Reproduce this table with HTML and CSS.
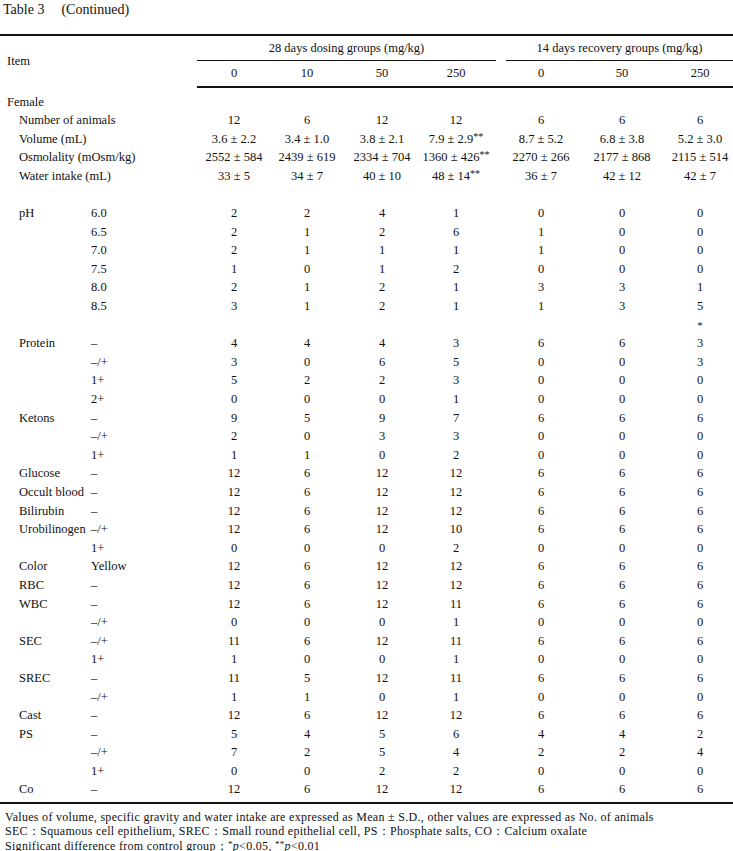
FILE: index.html
```html
<!DOCTYPE html>
<html>
<head>
<meta charset="utf-8">
<link rel="stylesheet" href="styles.css">
</head>
<body>
<div class="title">Table 3<span class="tsp"></span>(Continued)</div>
<table class="data">
<colgroup>
<col class="c-item"><col class="c-sub"><col class="c1"><col class="c2"><col class="c3"><col class="c4"><col class="c5"><col class="c6"><col class="c7">
</colgroup>
<thead>
<tr class="h1">
<th rowspan="2" colspan="2" class="item">Item</th>
<th colspan="4" class="grp"><div class="grp-label dose">28 days dosing groups (mg/kg)</div></th>
<th colspan="3" class="grp"><div class="grp-label rec">14 days recovery groups (mg/kg)</div></th>
</tr>
<tr class="h2">
<th>0</th><th>10</th><th>50</th><th>250</th><th>0</th><th>50</th><th class="last">250</th>
</tr>
</thead>
<tbody>
<tr class="sp"><td colspan="9"></td></tr>
<tr><td colspan="2" class="sex">Female</td><td></td><td></td><td></td><td></td><td></td><td></td><td class="last"></td></tr>
<tr><td colspan="2" class="lbl">Number of animals</td><td>12</td><td>6</td><td>12</td><td>12</td><td>6</td><td>6</td><td class="last">6</td></tr>
<tr><td colspan="2" class="lbl">Volume (mL)</td><td>3.6 ± 2.2</td><td>3.4 ± 1.0</td><td>3.8 ± 2.1</td><td>7.9 ± 2.9<span class="sig">**</span></td><td>8.7 ± 5.2</td><td>6.8 ± 3.8</td><td class="last">5.2 ± 3.0</td></tr>
<tr><td colspan="2" class="lbl">Osmolality (mOsm/kg)</td><td>2552 ± 584</td><td>2439 ± 619</td><td>2334 ± 704</td><td>1360 ± 426<span class="sig">**</span></td><td>2270 ± 266</td><td>2177 ± 868</td><td class="last">2115 ± 514</td></tr>
<tr><td colspan="2" class="lbl">Water intake (mL)</td><td>33 ± 5</td><td>34 ± 7</td><td>40 ± 10</td><td>48 ± 14<span class="sig">**</span></td><td>36 ± 7</td><td>42 ± 12</td><td class="last">42 ± 7</td></tr>
<tr><td colspan="9"></td></tr>
<tr><td class="lbl">pH</td><td class="sub">6.0</td><td>2</td><td>2</td><td>4</td><td>1</td><td>0</td><td>0</td><td class="last">0</td></tr>
<tr><td class="lbl"></td><td class="sub">6.5</td><td>2</td><td>1</td><td>2</td><td>6</td><td>1</td><td>0</td><td class="last">0</td></tr>
<tr><td class="lbl"></td><td class="sub">7.0</td><td>2</td><td>1</td><td>1</td><td>1</td><td>1</td><td>0</td><td class="last">0</td></tr>
<tr><td class="lbl"></td><td class="sub">7.5</td><td>1</td><td>0</td><td>1</td><td>2</td><td>0</td><td>0</td><td class="last">0</td></tr>
<tr><td class="lbl"></td><td class="sub">8.0</td><td>2</td><td>1</td><td>2</td><td>1</td><td>3</td><td>3</td><td class="last">1</td></tr>
<tr><td class="lbl"></td><td class="sub">8.5</td><td>3</td><td>1</td><td>2</td><td>1</td><td>1</td><td>3</td><td class="last">5</td></tr>
<tr><td class="lbl"></td><td class="sub"></td><td></td><td></td><td></td><td></td><td></td><td></td><td class="last"><span class="star">*</span></td></tr>
<tr><td class="lbl">Protein</td><td class="sub">–</td><td>4</td><td>4</td><td>4</td><td>3</td><td>6</td><td>6</td><td class="last">3</td></tr>
<tr><td class="lbl"></td><td class="sub">–/+</td><td>3</td><td>0</td><td>6</td><td>5</td><td>0</td><td>0</td><td class="last">3</td></tr>
<tr><td class="lbl"></td><td class="sub">1+</td><td>5</td><td>2</td><td>2</td><td>3</td><td>0</td><td>0</td><td class="last">0</td></tr>
<tr><td class="lbl"></td><td class="sub">2+</td><td>0</td><td>0</td><td>0</td><td>1</td><td>0</td><td>0</td><td class="last">0</td></tr>
<tr><td class="lbl">Ketons</td><td class="sub">–</td><td>9</td><td>5</td><td>9</td><td>7</td><td>6</td><td>6</td><td class="last">6</td></tr>
<tr><td class="lbl"></td><td class="sub">–/+</td><td>2</td><td>0</td><td>3</td><td>3</td><td>0</td><td>0</td><td class="last">0</td></tr>
<tr><td class="lbl"></td><td class="sub">1+</td><td>1</td><td>1</td><td>0</td><td>2</td><td>0</td><td>0</td><td class="last">0</td></tr>
<tr><td class="lbl">Glucose</td><td class="sub">–</td><td>12</td><td>6</td><td>12</td><td>12</td><td>6</td><td>6</td><td class="last">6</td></tr>
<tr><td class="lbl">Occult blood</td><td class="sub">–</td><td>12</td><td>6</td><td>12</td><td>12</td><td>6</td><td>6</td><td class="last">6</td></tr>
<tr><td class="lbl">Bilirubin</td><td class="sub">–</td><td>12</td><td>6</td><td>12</td><td>12</td><td>6</td><td>6</td><td class="last">6</td></tr>
<tr><td class="lbl">Urobilinogen</td><td class="sub">–/+</td><td>12</td><td>6</td><td>12</td><td>10</td><td>6</td><td>6</td><td class="last">6</td></tr>
<tr><td class="lbl"></td><td class="sub">1+</td><td>0</td><td>0</td><td>0</td><td>2</td><td>0</td><td>0</td><td class="last">0</td></tr>
<tr><td class="lbl">Color</td><td class="sub">Yellow</td><td>12</td><td>6</td><td>12</td><td>12</td><td>6</td><td>6</td><td class="last">6</td></tr>
<tr><td class="lbl">RBC</td><td class="sub">–</td><td>12</td><td>6</td><td>12</td><td>12</td><td>6</td><td>6</td><td class="last">6</td></tr>
<tr><td class="lbl">WBC</td><td class="sub">–</td><td>12</td><td>6</td><td>12</td><td>11</td><td>6</td><td>6</td><td class="last">6</td></tr>
<tr><td class="lbl"></td><td class="sub">–/+</td><td>0</td><td>0</td><td>0</td><td>1</td><td>0</td><td>0</td><td class="last">0</td></tr>
<tr><td class="lbl">SEC</td><td class="sub">–/+</td><td>11</td><td>6</td><td>12</td><td>11</td><td>6</td><td>6</td><td class="last">6</td></tr>
<tr><td class="lbl"></td><td class="sub">1+</td><td>1</td><td>0</td><td>0</td><td>1</td><td>0</td><td>0</td><td class="last">0</td></tr>
<tr><td class="lbl">SREC</td><td class="sub">–</td><td>11</td><td>5</td><td>12</td><td>11</td><td>6</td><td>6</td><td class="last">6</td></tr>
<tr><td class="lbl"></td><td class="sub">–/+</td><td>1</td><td>1</td><td>0</td><td>1</td><td>0</td><td>0</td><td class="last">0</td></tr>
<tr><td class="lbl">Cast</td><td class="sub">–</td><td>12</td><td>6</td><td>12</td><td>12</td><td>6</td><td>6</td><td class="last">6</td></tr>
<tr><td class="lbl">PS</td><td class="sub">–</td><td>5</td><td>4</td><td>5</td><td>6</td><td>4</td><td>4</td><td class="last">2</td></tr>
<tr><td class="lbl"></td><td class="sub">–/+</td><td>7</td><td>2</td><td>5</td><td>4</td><td>2</td><td>2</td><td class="last">4</td></tr>
<tr><td class="lbl"></td><td class="sub">1+</td><td>0</td><td>0</td><td>2</td><td>2</td><td>0</td><td>0</td><td class="last">0</td></tr>
<tr><td class="lbl">Co</td><td class="sub">–</td><td>12</td><td>6</td><td>12</td><td>12</td><td>6</td><td>6</td><td class="last">6</td></tr>
<tr class="sp-end"><td colspan="9"></td></tr>
</tbody>
</table>
<div class="notes">
<p>Values of volume, specific gravity and water intake are expressed as Mean ± S.D., other values are expressed as No. of animals</p>
<p>SEC：Squamous cell epithelium, SREC：Small round epithelial cell, PS：Phosphate salts, CO：Calcium oxalate</p>
<p>Significant difference from control group；<span class="nsig">*</span><i>p</i>&lt;0.05, <span class="nsig">**</span><i>p</i>&lt;0.01</p>
</div>
</body>
</html>
```
FILE: styles.css
```css
html, body {
  margin: 0;
  padding: 0;
  background: #fff;
}
body {
  width: 733px;
  font-family: "Liberation Serif", "Times New Roman", serif;
  color: #111;
  font-size: 12.5px;
}
.title {
  height: 20px;
  line-height: 20px;
  padding-left: 3px;
  font-size: 14px;
  margin-bottom: 14px;
}
.tsp {
  display: inline-block;
  width: 17px;
}
.data {
  width: 733px;
  table-layout: fixed;
  border-collapse: collapse;
  border-top: 2px solid #111;
  border-bottom: 2px solid #111;
}
.c-item { width: 87px; }
.c-sub { width: 110px; }
.c1 { width: 74px; }
.c2 { width: 72px; }
.c3 { width: 78px; }
.c4 { width: 70px; }
.c5 { width: 100px; }
.c6 { width: 62px; }
.c7 { width: 80px; }
.data th, .data td {
  padding: 0;
  font-weight: normal;
  text-align: center;
  white-space: nowrap;
}
.data th.item {
  text-align: left;
  padding-left: 7px;
  vertical-align: middle;
}
.h1 th { height: 24px; vertical-align: bottom; }
.h2 th {
  height: 25px;
  border-bottom: 2px solid #111;
}
.grp-label {
  height: 25px;
  line-height: 24px;
  border-bottom: 1px solid #111;
  box-sizing: border-box;
}
.grp-label.dose { margin-right: -5px; }
.grp-label.rec { margin-left: 15px; }
.data .last { padding-left: 14px; }
.data tbody tr { height: 18.6px; }
.data tbody td { height: 18.6px; line-height: 18.6px; }
.data tbody tr.sp { height: 4.5px; }
.data tbody tr.sp td { height: 4.5px; line-height: 0; }
.data tbody tr.sp-end { height: 3px; }
.data tbody tr.sp-end td { height: 3px; line-height: 0; }
.data td.sex { text-align: left; padding-left: 7px; }
.data td.lbl { text-align: left; padding-left: 19px; }
.data td.sub { text-align: left; padding-left: 4px; }
.sig {
  font-size: 10px;
  vertical-align: 3px;
  line-height: 0;
}
.star {
  font-size: 11px;
  position: relative;
  top: 0;
}
.notes {
  margin-top: 5.5px;
  font-size: 12px;
  letter-spacing: 0.3px;
}
.notes p {
  margin: 0;
  height: 14.5px;
  line-height: 14.5px;
  padding-left: 5px;
  white-space: nowrap;
}
.nsig {
  font-size: 9px;
  vertical-align: 3px;
  line-height: 0;
}
```
